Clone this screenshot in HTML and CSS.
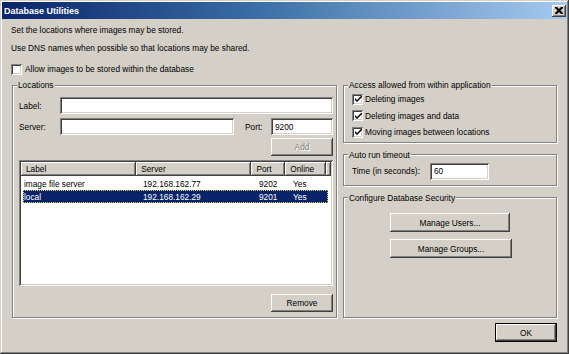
FILE: index.html
```html
<!DOCTYPE html>
<html lang="en">
<head>
    <meta charset="UTF-8">
    <title>Database Utilities</title>
    <link rel="stylesheet" href="styles.css">
</head>
<body>
    <div class="window">
        <div class="titlebar">
            <span class="title">Database Utilities</span>
            <span class="close">
                <svg width="8" height="7" viewBox="0 0 8 7"><path d="M0 0h2l2 2 2-2h2v1l-2.5 2.5 2.5 2.5v1h-2l-2-2-2 2h-2v-1l2.5-2.5-2.5-2.5z" fill="#000"/></svg>
            </span>
        </div>
        <div class="content">
            <p class="note">Set the locations where images may be stored.</p>
            <p class="note">Use DNS names when possible so that locations may be shared.</p>
            <label class="check"><span class="box"></span>Allow images to be stored within the database</label>

            <div class="main">
                <fieldset class="group locations">
                    <legend>Locations</legend>
                    <div class="field-row">
                        <span class="field-label">Label:</span>
                        <input class="field" type="text" value="">
                    </div>
                    <div class="field-row server-row">
                        <span class="field-label">Server:</span>
                        <input class="field server" type="text" value="">
                        <span class="port-label">Port:</span>
                        <input class="field port" type="text" value="9200">
                    </div>
                    <button class="btn small disabled">Add</button>

                    <div class="listview">
                        <div class="list-head">
                            <span class="col-label">Label</span>
                            <span class="col-server">Server</span>
                            <span class="col-port">Port</span>
                            <span class="col-online">Online</span>
                            <span class="col-rest"></span>
                        </div>
                        <div class="list-row">
                            <span>image file server</span>
                            <span>192.168.162.77</span>
                            <span>9202</span>
                            <span>Yes</span>
                        </div>
                        <div class="list-row selected">
                            <span>local</span>
                            <span>192.168.162.29</span>
                            <span>9201</span>
                            <span>Yes</span>
                        </div>
                    </div>

                    <button class="btn small">Remove</button>
                </fieldset>

                <div class="side">
                    <fieldset class="group access">
                        <legend>Access allowed from within application</legend>
                        <label class="check"><span class="box checked"><svg width="7" height="7" viewBox="0 0 7 7"><path d="M0 2l2 2 5-5v2l-5 5-2-2z" fill="#000"/></svg></span>Deleting images</label>
                        <label class="check"><span class="box checked"><svg width="7" height="7" viewBox="0 0 7 7"><path d="M0 2l2 2 5-5v2l-5 5-2-2z" fill="#000"/></svg></span>Deleting images and data</label>
                        <label class="check"><span class="box checked"><svg width="7" height="7" viewBox="0 0 7 7"><path d="M0 2l2 2 5-5v2l-5 5-2-2z" fill="#000"/></svg></span>Moving images between locations</label>
                    </fieldset>

                    <fieldset class="group timeout">
                        <legend>Auto run timeout</legend>
                        <div class="time-row">
                            <span class="time-label">Time (in seconds):</span>
                            <input class="field time" type="text" value="60">
                        </div>
                    </fieldset>

                    <fieldset class="group security">
                        <legend>Configure Database Security</legend>
                        <button class="btn users">Manage Users...</button>
                        <button class="btn groups">Manage Groups...</button>
                    </fieldset>
                </div>
            </div>

            <div class="footer">
                <button class="btn ok">OK</button>
            </div>
        </div>
    </div>
</body>
</html>
```

FILE: styles.css
```css
* {
    box-sizing: border-box;
}

body {
    margin: 0;
    font-family: "Liberation Sans", Arial, sans-serif;
    font-size: 8.3px;
    color: #000;
    background-color: #d4d0c8;
}

.window {
    width: 569px;
    height: 354px;
    padding: 2px;
    display: flex;
    flex-direction: column;
    background-color: #d4d0c8;
    box-shadow: inset -1px -1px #404040, inset 1px 1px #d4d0c8, inset -2px -2px #808080, inset 2px 2px #fff;
}

.titlebar {
    height: 17px;
    display: flex;
    align-items: center;
    justify-content: space-between;
    padding: 0 1px 0 2px;
    background: linear-gradient(to right, #0a246a 0%, #3a6ea5 45%, #a6caf0 100%);
}

.title {
    color: #fff;
    font-weight: bold;
    font-size: 9px;
}

.close {
    width: 14px;
    height: 12px;
    display: flex;
    align-items: center;
    justify-content: center;
    background-color: #d4d0c8;
    box-shadow: inset -1px -1px #404040, inset 1px 1px #fff, inset -2px -2px #808080;
}

.content {
    flex: 1;
    display: flex;
    flex-direction: column;
    padding: 2px 10px 10px 9px;
}

.note {
    margin: 0;
    line-height: 18px;
}

.check {
    display: flex;
    align-items: center;
    gap: 3px;
    height: 18px;
}

.content > .check {
    margin-top: 3px;
}

.box {
    width: 11px;
    height: 11px;
    display: flex;
    align-items: center;
    justify-content: center;
    background-color: #fff;
    box-shadow: inset 1px 1px #808080, inset -1px -1px #fff, inset 2px 2px #404040, inset -2px -2px #d4d0c8;
}

.box svg {
    margin: 1px 0 0 1px;
}

.main {
    flex: 1;
    display: grid;
    grid-template-columns: 325px 214px;
    gap: 6px;
    margin: 1px 0 0 1px;
}

.group {
    margin: 0;
    min-width: 0;
    border: 1px solid #808080;
    box-shadow: inset 1px 1px #fff, 1px 1px #fff;
}

.group legend {
    padding: 0 1px;
    margin-left: -4px;
    line-height: 12px;
    background-color: #d4d0c8;
}

.locations {
    display: flex;
    flex-direction: column;
    padding: 6px 3px 5px 6px;
}

.locations legend {
    margin-left: -2px;
}

.field-row {
    display: flex;
    align-items: center;
    height: 17px;
}

.server-row {
    margin-top: 4px;
}

.field-label {
    width: 41px;
    flex: none;
}

.field {
    height: 17px;
    flex: 1;
    min-width: 0;
    border: none;
    outline: none;
    padding: 0 4px;
    font-family: inherit;
    font-size: inherit;
    color: #000;
    background-color: #fff;
    box-shadow: inset 1px 1px #808080, inset -1px -1px #fff, inset 2px 2px #404040, inset -2px -2px #d4d0c8;
}

.field.server {
    flex: none;
    width: 174px;
}

.port-label {
    margin-left: 11px;
    width: 26px;
}

.field.port {
    flex: none;
    width: 62px;
}

.btn {
    height: 19px;
    padding: 0;
    border: none;
    font-family: inherit;
    font-size: inherit;
    color: #000;
    background-color: #d4d0c8;
    box-shadow: inset -1px -1px #404040, inset 1px 1px #fff, inset -2px -2px #808080, inset 2px 2px #d4d0c8;
}

.btn.small {
    width: 62px;
    height: 18px;
    align-self: flex-end;
    margin-top: 3px;
}

.btn.disabled {
    color: #808080;
    text-shadow: 1px 1px #fff;
}

.listview {
    flex: 1;
    margin: 4px 0 5px;
    padding: 2px;
    background-color: #fff;
    box-shadow: inset 1px 1px #808080, inset -1px -1px #fff, inset 2px 2px #404040, inset -2px -2px #d4d0c8;
}

.list-head {
    display: flex;
    height: 14px;
    margin-bottom: 1px;
}

.list-head span {
    display: flex;
    align-items: center;
    padding-left: 5px;
    background-color: #d4d0c8;
    box-shadow: inset -1px -1px #404040, inset 1px 1px #fff, inset -2px -2px #808080;
}

.list-head .col-label {
    width: 116px;
}

.list-head .col-server {
    width: 116px;
}

.list-head .col-port {
    width: 34px;
}

.list-head .col-online {
    width: 41px;
}

.list-head .col-rest {
    flex: 1;
}

.list-row {
    display: grid;
    grid-template-columns: 114px 116px 34px 41px;
    height: 13px;
    width: 305px;
    margin-left: 2px;
    align-items: center;
}

.list-row span {
    padding-left: 6px;
}

.list-row span:first-child {
    padding-left: 1px;
}

.list-row.selected {
    color: #fff;
    background-color: #0a246a;
    outline: 1px dotted #e6d66c;
    outline-offset: -1px;
}

.side {
    display: flex;
    flex-direction: column;
    gap: 6px;
}

.access {
    padding: 0 4px 1px 8px;
}

.access .check {
    height: 16.5px;
    gap: 2px;
}

.timeout {
    padding: 2px 4px 5px 8px;
}

.time-row {
    display: flex;
    align-items: center;
}

.time-label {
    width: 78px;
}

.field.time {
    flex: none;
    width: 59px;
}

.security {
    flex: 1;
    display: flex;
    flex-direction: column;
    align-items: center;
    padding: 9.5px 8px 0;
}

.btn.users {
    width: 120px;
}

.btn.groups {
    width: 122px;
    margin: 7px 0 0 2px;
}

.footer {
    display: flex;
    justify-content: flex-end;
    margin-top: 5px;
}

.btn.ok {
    width: 62px;
    box-shadow: inset 0 0 0 1px #000, inset -2px -2px #404040, inset 2px 2px #fff, inset -3px -3px #808080;
}
```
